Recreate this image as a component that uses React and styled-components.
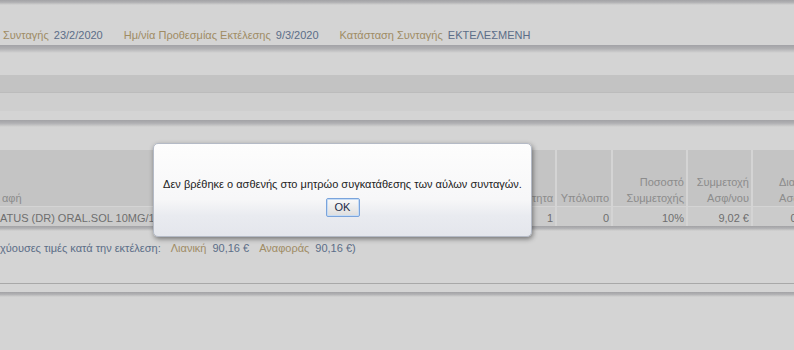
import styled, { createGlobalStyle } from 'styled-components';

const GlobalStyle = createGlobalStyle`
  html, body {
    margin: 0;
    padding: 0;
    background: #ffffff;
    overflow: hidden;
  }

  body {
    font-family: "Liberation Sans", Arial, sans-serif;
    font-size: 11px;
  }
`;

const Page = styled.div`
  position: relative;
  width: 794px;
  height: 350px;
  overflow: hidden;
  background: #ffffff;
`;

const Shadow = styled.div`
  height: ${(props) => props.h || 8}px;
  background: linear-gradient(#c4c4c8, #d4d4d7 45%, #ffffff);
`;

const InfoBar = styled.div`
  display: flex;
  align-items: center;
  gap: 21px;
  height: 40px;
  box-sizing: border-box;
  padding: 19px 0 0 3px;
  line-height: 14px;
`;

const Field = styled.span`
  display: flex;
  gap: ${(props) => props.gap || 5}px;
  white-space: nowrap;
`;

const Label = styled.span`
  color: #c1a979;
`;

const Value = styled.span`
  color: #6f85a4;
`;

const Gap = styled.div`
  height: ${(props) => props.h}px;
`;

const Band = styled.div`
  height: ${(props) => props.h}px;
  background: ${(props) => props.bg};
  border-bottom: ${(props) => (props.line ? `1px solid ${props.line}` : 'none')};
`;

const Table = styled.div`
  display: grid;
  grid-template-columns: 488px 65px 54px 73px 63px 70px;
  column-gap: 2px;
  width: 830px;
`;

const HeadCell = styled.div`
  display: flex;
  flex-direction: column;
  justify-content: flex-end;
  align-items: ${(props) => (props.left ? 'flex-start' : 'flex-end')};
  height: 57px;
  box-sizing: border-box;
  padding: 0 2px 0;
  background: #ececec;
  color: #a9a9a9;
  line-height: 16px;
  text-align: ${(props) => (props.left ? 'left' : 'right')};
  white-space: nowrap;
  border-bottom: 1px solid #ffffff;
`;

const DataCell = styled.div`
  height: 19px;
  box-sizing: border-box;
  padding: 0 2px;
  background: #f5f5f5;
  color: #858585;
  line-height: 22px;
  text-align: ${(props) => (props.left ? 'left' : 'right')};
  white-space: nowrap;
  overflow: hidden;
  padding-left: ${(props) => (props.left ? 0 : 2)}px;
`;

const Footer = styled.div`
  display: flex;
  gap: 10px;
  height: 52px;
  box-sizing: border-box;
  padding-top: 10px;
  line-height: 14px;
  white-space: nowrap;
`;

const Overlay = styled.div`
  position: absolute;
  inset: 0;
  background: rgba(0, 0, 0, 0.17);
`;

const Dialog = styled.div`
  position: absolute;
  left: 153px;
  top: 143px;
  width: 379px;
  height: 94px;
  box-sizing: border-box;
  display: flex;
  flex-direction: column;
  align-items: center;
  padding-top: 33px;
  border: 1px solid #b4bac6;
  border-radius: 5px;
  background: linear-gradient(#fdfdfd, #f7f7f8 60%, #e9ebf0 78%, #e4e6ec);
  box-shadow: 1px 2px 5px rgba(0, 0, 0, 0.45);
`;

const Message = styled.div`
  color: #222222;
  font-size: 11px;
  line-height: 14px;
  white-space: nowrap;
`;

const OkButton = styled.button`
  margin-top: 7px;
  width: 34px;
  height: 19px;
  padding: 0;
  border: 1px solid #7aa4dc;
  border-radius: 2px;
  background: linear-gradient(#fafafa, #ececec 50%, #dedede);
  box-shadow: inset 0 0 0 1px #c6dcf5;
  color: #1c2c48;
  font-family: "Liberation Sans", Arial, sans-serif;
  font-size: 11px;
  line-height: 17px;
`;

export default function App() {
  return (
    <Page>
      <GlobalStyle />
      <Shadow h={5} />
      <InfoBar>
        <Field>
          <Label>Συνταγής</Label>
          <Value>23/2/2020</Value>
        </Field>
        <Field>
          <Label>Ημ/νία Προθεσμίας Εκτέλεσης</Label>
          <Value>9/3/2020</Value>
        </Field>
        <Field>
          <Label>Κατάσταση Συνταγής</Label>
          <Value>ΕΚΤΕΛΕΣΜΕΝΗ</Value>
        </Field>
      </InfoBar>
      <Shadow h={8} />
      <Gap h={22} />
      <Band h={17} bg="#ebebeb" line="#e2e2e2" />
      <Band h={18} bg="#f9f9f9" />
      <Gap h={9} />
      <Shadow h={7} />
      <Gap h={23} />
      <Table>
        <HeadCell left>αφή</HeadCell>
        <HeadCell>Ποσότητα</HeadCell>
        <HeadCell>Υπόλοιπο</HeadCell>
        <HeadCell>
          <span>Ποσοστό</span>
          <span>Συμμετοχής</span>
        </HeadCell>
        <HeadCell>
          <span>Συμμετοχή</span>
          <span>Ασφ/νου</span>
        </HeadCell>
        <HeadCell>
          <span>Διαφορά</span>
          <span>Ασφ/νου</span>
        </HeadCell>
        <DataCell left>ATUS (DR) ORAL.SOL 10MG/1ML</DataCell>
        <DataCell>1</DataCell>
        <DataCell>0</DataCell>
        <DataCell>10%</DataCell>
        <DataCell>9,02 €</DataCell>
        <DataCell>0,00 €</DataCell>
      </Table>
      <Shadow h={5} />
      <Footer>
        <Value>χύουσες τιμές κατά την εκτέλεση:</Value>
        <Field gap={6}>
          <Label>Λιανική</Label>
          <Value>90,16 €</Value>
        </Field>
        <Field gap={6}>
          <Label>Αναφοράς</Label>
          <Value>90,16 €)</Value>
        </Field>
      </Footer>
      <Band h={1} bg="#cacaca" />
      <Gap h={8} />
      <Shadow h={5} />
      <Overlay />
      <Dialog>
        <Message>Δεν βρέθηκε ο ασθενής στο μητρώο συγκατάθεσης των αύλων συνταγών.</Message>
        <OkButton type="button">OK</OkButton>
      </Dialog>
    </Page>
  );
}
